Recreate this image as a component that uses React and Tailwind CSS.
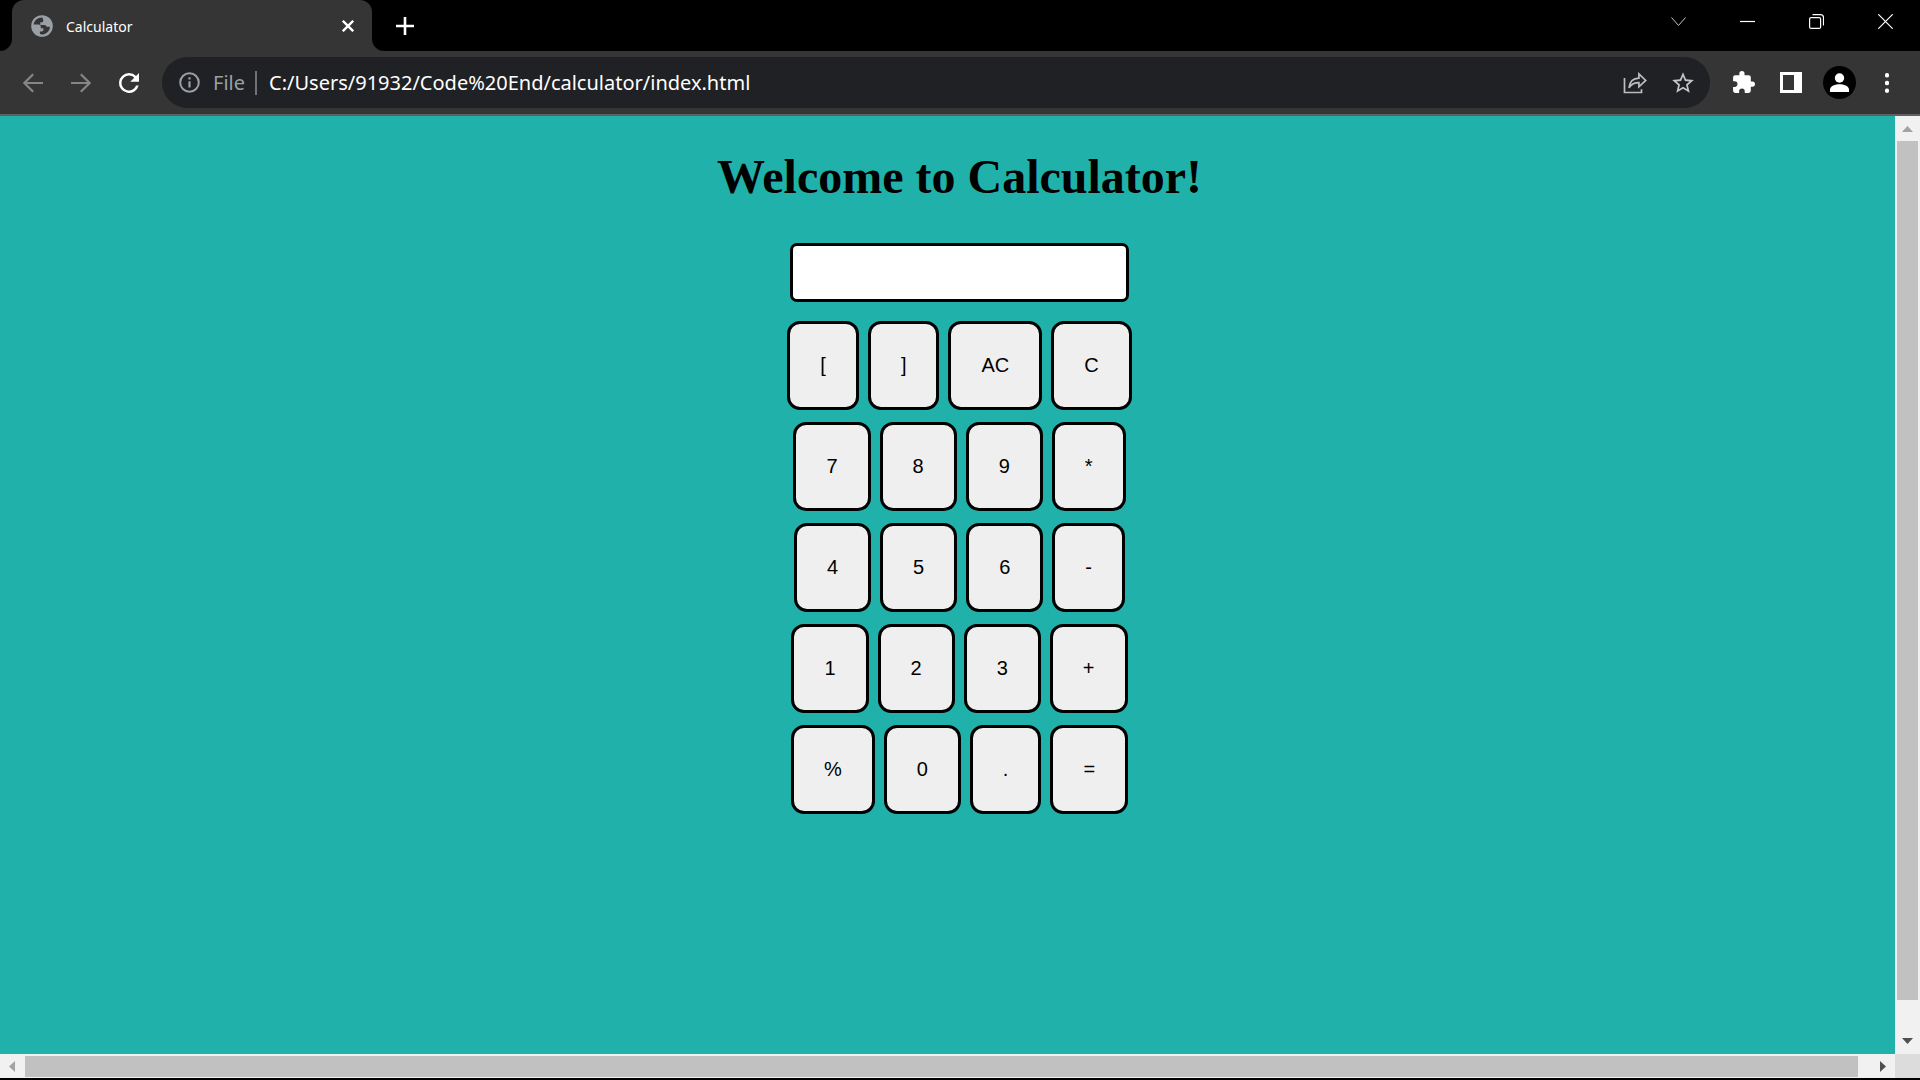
const KEY_ROWS = [
  ['[', ']', 'AC', 'C'],
  ['7', '8', '9', '*'],
  ['4', '5', '6', '-'],
  ['1', '2', '3', '+'],
  ['%', '0', '.', '='],
];

function Globe() {
  return (
    <svg className="size-[22px] shrink-0" viewBox="0 0 22 22" aria-hidden="true">
      <circle cx="11" cy="11" r="10.8" fill="#9aa0a6" />
      <path
        d="M11.500 2.500C6.800 2.300 3.300 5.300 2.600 9.500h4.600c1.700 0 2.600.9 2.600 2.300v1.400h2.600v1.500c0 1-.6 1.700-1.600 1.700H8.900v2.700c3.900 1 7.300-.8 9-3.700.8-1.400 1-2.600 1-3.700h-3.300c-.6-1.300-1.200-1.800-2.500-1.800H9.300V7.300h1.500c.9 0 1.400-.6 1.400-1.400v-.6c0-1-.3-1.800-.7-2.800Z"
        fill="#353535"
      />
    </svg>
  );
}

function Flare({ flip }) {
  return (
    <svg
      className={
        flip
          ? 'absolute bottom-0 left-full size-3 -scale-x-100'
          : 'absolute bottom-0 right-full size-3'
      }
      viewBox="0 0 12 12"
      aria-hidden="true"
    >
      <path d="M12 0v12H0A12 12 0 0 0 12 0Z" fill="#353535" />
    </svg>
  );
}

function WindowButton({ label, children }) {
  return (
    <button type="button" aria-label={label} className="flex h-[43px] w-[69px] items-center justify-center">
      <svg className="size-[15px]" viewBox="0 0 15 15" fill="none" stroke="#fff" strokeWidth="1.2">
        {children}
      </svg>
    </button>
  );
}

function TabStrip() {
  return (
    <header className="flex h-[51px] shrink-0 items-start bg-black pl-3">
      <div className="relative flex h-full w-[360px] items-center rounded-t-xl bg-[#353535] pl-[19px] pr-3">
        <Flare />
        <Flare flip />
        <Globe />
        <span className="ml-[13px] flex-1 pt-0.5 font-['Noto_Sans','Open_Sans',sans-serif] text-[14px] leading-5 text-white">
          Calculator
        </span>
        <button type="button" aria-label="Close tab" className="flex size-6 items-center justify-center">
          <svg className="size-3" viewBox="0 0 12 12" fill="none" stroke="#fff" strokeWidth="2.4">
            <path d="m.8.800 10.400 10.400M11.200.800.800 11.200" />
          </svg>
        </button>
      </div>
      <button type="button" aria-label="New tab" className="ml-[15px] flex h-full w-9 items-center justify-center">
        <svg className="size-[18px]" viewBox="0 0 18 18" fill="none" stroke="#fff" strokeWidth="2.600">
          <path d="M9 0v18M0 9h18" />
        </svg>
      </button>
      <div className="ml-auto flex">
        <WindowButton label="Search tabs">
          <path d="m.5 3.500 7 8 7-8" stroke="#c4c4c4" strokeWidth="1" />
        </WindowButton>
        <WindowButton label="Minimize">
          <path d="M0 7.500h15" />
        </WindowButton>
        <WindowButton label="Restore">
          <rect x=".6" y="3.600" width="11" height="10.800" rx="1.500" />
          <path d="M3.500.6h8a3 3 0 0 1 3 3v8" />
        </WindowButton>
        <WindowButton label="Close window">
          <path d="m.3.300 14.400 14.400M14.700.300.300 14.700" />
        </WindowButton>
      </div>
    </header>
  );
}

function ToolButton({ label, children }) {
  return (
    <button type="button" aria-label={label} className="flex h-12 w-12 shrink-0 items-center justify-center">
      {children}
    </button>
  );
}

function Toolbar() {
  return (
    <nav className="flex h-[65px] shrink-0 items-center gap-[9px] border-b-2 border-[#606060] bg-[#353535] px-[9px]">
      <div className="flex">
        <ToolButton label="Back">
          <svg className="size-5" viewBox="0 0 20 20" fill="none" stroke="#868686" strokeWidth="2.200">
            <path d="M20 10H1.800M10.200 1.200 1.400 10l8.800 8.800" />
          </svg>
        </ToolButton>
        <ToolButton label="Forward">
          <svg className="size-5" viewBox="0 0 20 20" fill="none" stroke="#868686" strokeWidth="2.200">
            <path d="M0 10h18.200M9.800 1.200l8.800 8.800-8.800 8.800" />
          </svg>
        </ToolButton>
        <ToolButton label="Reload">
          <svg className="size-[30px]" viewBox="0 0 24 24" fill="#fff">
            <path d="M17.650 6.350A7.960 7.960 0 0 0 12 4a8 8 0 1 0 7.730 10h-2.080A6 6 0 1 1 12 6c1.660 0 3.140.69 4.220 1.780L13 11h7V4l-2.350 2.350Z" />
          </svg>
        </ToolButton>
      </div>

      <div className="flex h-[51px] min-w-0 flex-1 items-center rounded-full bg-[#202124] pl-[17px] pr-[3px] font-['Noto_Sans','Open_Sans',sans-serif]">
        <svg className="size-[21px] shrink-0" viewBox="0 0 21 21" fill="none" stroke="#9aa0a6" strokeWidth="2" aria-hidden="true">
          <circle cx="10.500" cy="10.500" r="9.300" />
          <path d="M10.500 9.300v6.200M10.500 5.300v2.200" strokeWidth="2.200" />
        </svg>
        <label htmlFor="address" className="ml-[13px] w-[42px] text-[20px] leading-6 text-[#9aa0a6]">
          File
        </label>
        <span className="h-6 w-0.5 bg-[#6f7276]" />
        <input
          id="address"
          type="text"
          defaultValue="C:/Users/91932/Code%20End/calculator/index.html"
          spellCheck="false"
          className="ml-3 min-w-0 flex-1 bg-transparent text-[20px] leading-6 text-white outline-none"
        />
        <ToolButton label="Share this page">
          <svg className="h-[22px] w-6" viewBox="0 0 24 22" fill="none" stroke="#bdbdbd" strokeWidth="1.700">
            <path d="M1.500 6v14.500h17v-3.300" />
            <path d="M6 15.800c.6-5.800 4-9.500 9.900-9.700V1.900l6.800 6.500-6.800 6.400v-4.100c-4.500-.1-7.600 1.300-9.900 5.100Z" />
          </svg>
        </ToolButton>
        <ToolButton label="Bookmark this tab">
          <svg className="size-[26px]" viewBox="0 0 24 24" fill="#c4c4c4">
            <path d="m22 9.240-7.190-.62L12 2 9.190 8.630 2 9.240l5.460 4.730L5.820 21 12 17.270 18.180 21l-1.630-7.030L22 9.240ZM12 15.400l-3.760 2.270 1-4.280-3.320-2.880 4.380-.38L12 6.100l1.710 4.040 4.380.38-3.320 2.880 1 4.280L12 15.400Z" />
          </svg>
        </ToolButton>
      </div>

      <div className="flex">
        <ToolButton label="Extensions">
          <svg className="size-[25px]" viewBox="0 0 24 24" fill="#fff">
            <path d="M20.500 11H19V7a2 2 0 0 0-2-2h-4V3.500a2.500 2.500 0 0 0-5 0V5H4a2 2 0 0 0-1.990 2v3.800H3.500a2.700 2.700 0 0 1 0 5.400H2V20a2 2 0 0 0 2 2h3.800v-1.500a2.700 2.700 0 0 1 5.400 0V22H17a2 2 0 0 0 2-2v-4h1.500a2.500 2.500 0 0 0 0-5Z" />
          </svg>
        </ToolButton>
        <ToolButton label="Side panel">
          <svg className="h-[21px] w-[22px]" viewBox="0 0 22 21">
            <path fillRule="evenodd" fill="#fff" d="M0 0h22v21H0V0Zm3 3v15h11V3H3Z" />
          </svg>
        </ToolButton>
        <ToolButton label="Profile">
          <svg className="size-[33px]" viewBox="0 0 33 33">
            <circle cx="16.500" cy="16.500" r="16.500" fill="#000" />
            <circle cx="16.500" cy="12" r="4.700" fill="#fff" />
            <path d="M7 26v-2.500c0-3.300 5.500-5.200 9.500-5.200s9.500 1.900 9.500 5.200V26H7Z" fill="#fff" />
          </svg>
        </ToolButton>
        <ToolButton label="Browser menu">
          <svg className="h-5 w-1" viewBox="0 0 4 20" fill="#fff">
            <circle cx="2" cy="2.300" r="2.200" />
            <circle cx="2" cy="10" r="2.200" />
            <circle cx="2" cy="17.700" r="2.200" />
          </svg>
        </ToolButton>
      </div>
    </nav>
  );
}

function Calculator() {
  return (
    <main className="min-w-0 overflow-hidden bg-[#20b2aa] pl-6 text-black">
      <div className="flex flex-col items-center pt-[33px]">
        <h1 className="font-['Liberation_Serif',serif] text-5xl font-bold leading-[56px]">
          Welcome to Calculator!
        </h1>
        <input
          type="text"
          aria-label="Result"
          className="mt-[38px] h-[59px] w-[339px] rounded-[7px] border-3 border-black bg-white px-2 font-['Liberation_Sans',sans-serif] text-xl outline-none"
        />
        <div className="mt-[19px] flex flex-col gap-3">
          {KEY_ROWS.map((row) => (
            <div key={row[0]} className="flex justify-center gap-[9px]">
              {row.map((key) => (
                <button
                  key={key}
                  type="button"
                  className="h-[89px] rounded-[13px] border-3 border-black bg-[#efefef] px-[30px] pb-0.5 font-['Liberation_Sans',sans-serif] text-xl"
                >
                  {key}
                </button>
              ))}
            </div>
          ))}
        </div>
      </div>
    </main>
  );
}

function ScrollButton({ label, points, fill }) {
  return (
    <button type="button" aria-label={label} className="flex size-[25px] shrink-0 items-center justify-center">
      <svg className="size-[11px]" viewBox="0 0 11 11">
        <polygon points={points} fill={fill} />
      </svg>
    </button>
  );
}

export default function App() {
  return (
    <div className="flex h-screen flex-col bg-black pb-0.5">
      <TabStrip />
      <Toolbar />
      <div className="grid min-h-0 flex-1 grid-cols-[1fr_25px] grid-rows-[1fr_24px]">
        <Calculator />
        <div className="flex flex-col bg-[#f1f1f1]">
          <ScrollButton label="Scroll up" points="0,9 11,9 5.5,3" fill="#a3a3a3" />
          <div className="mx-0.5 mb-[29px] flex-1 bg-[#c1c1c1]" />
          <ScrollButton label="Scroll down" points="0,2 11,2 5.5,8" fill="#505050" />
        </div>
        <div className="flex items-center bg-[#f1f1f1]">
          <ScrollButton label="Scroll left" points="8,0 8,11 2,5.5" fill="#a3a3a3" />
          <div className="mr-3 h-[21px] flex-1 bg-[#c1c1c1]" />
          <ScrollButton label="Scroll right" points="3,0 3,11 9,5.5" fill="#505050" />
        </div>
        <div className="bg-[#dcdcdc]" />
      </div>
    </div>
  );
}
